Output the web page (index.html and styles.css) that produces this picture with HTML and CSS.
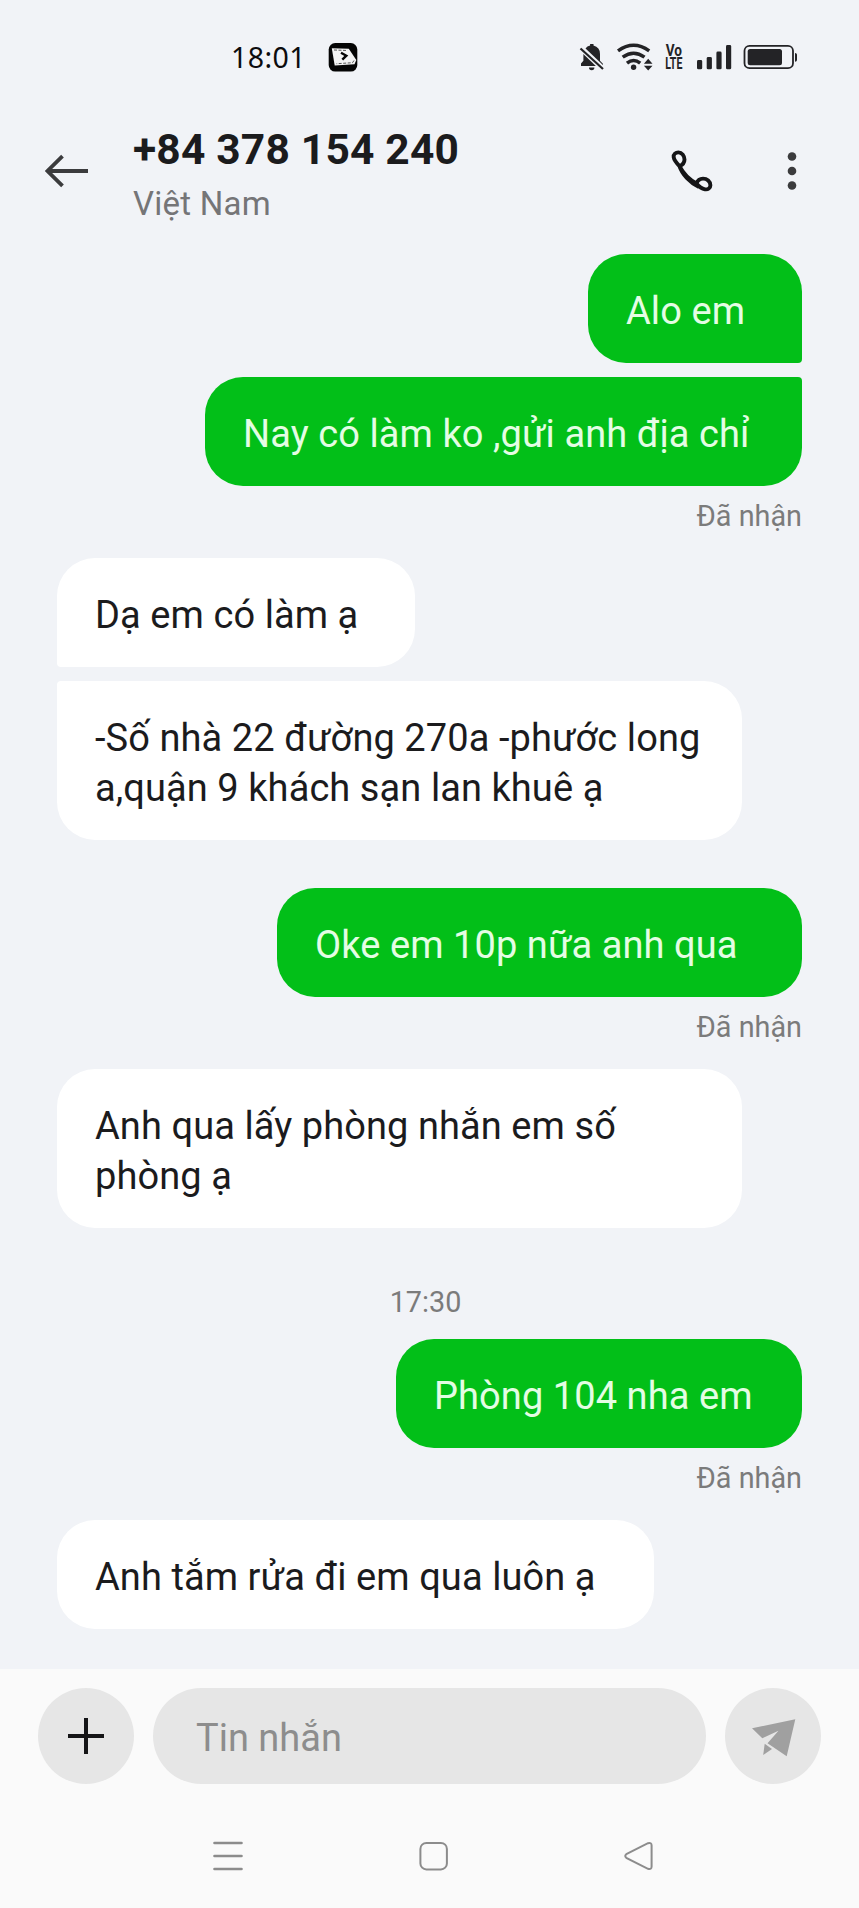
FILE: index.html
```html
<!DOCTYPE html>
<html lang="vi">
<head>
<meta charset="utf-8">
<title>Tin nhắn</title>
<link rel="stylesheet" href="styles.css">
</head>
<body>
<div class="statusbar">
  <span class="clock">18:01</span>
  <svg class="app-icon" width="30" height="30" viewBox="0 0 30 30"><rect x="0.700" y="1" width="28.600" height="28.600" rx="6.500" fill="#050505"/><path d="M3.800 6.200 20.800 6.700 28.300 18 26.500 22.200 6.700 23.500Z" fill="#f4f4f4"/><path d="M6 8 19.500 8.500M26 18.500l-1.500 2.200L8.500 21.700" fill="none" stroke="#444" stroke-width=".9" stroke-dasharray="3 1.500"/><path d="M13 10.800 18.300 13.700 14.300 17.600" fill="none" stroke="#050505" stroke-width="2.400"/></svg>
  <svg class="status-icons" width="222" height="30" viewBox="578 42 222 30">
    <g fill="#232326">
      <path d="M581 66v-2.400l2.400-2.900V54a8.700 8.700 0 0 1 6.700-8.400V44h3.400v1.600A8.700 8.700 0 0 1 600 54v6.700l2.900 3V66Z"/>
      <path d="M589 67.600h5.400a2.700 2.700 0 0 1-5.400 0Z"/>
      <circle cx="633.600" cy="67.300" r="2.700"/>
      <path d="m648.200 58.800 4.300 4.900h-8.600ZM648.200 70.500l4.300-4.800h-8.600Z"/>
      <rect x="697" y="60" width="5.200" height="9.300" rx="1.400"/><rect x="706.700" y="57" width="5.200" height="12.300" rx="1.400"/><rect x="716.400" y="51.500" width="5.200" height="17.800" rx="1.400"/><rect x="726" y="45" width="5.200" height="24.300" rx="1.400"/>
      <rect x="747.700" y="49" width="34.300" height="16.200" rx="2.500"/>
      <path d="M795 53c1.200 0 2 .8 2 2v4.800c0 1.200-.8 2-2 2Z"/>
    </g>
    <g fill="none">
      <path d="m581 48 21.800 20.700" stroke="#f1f3f7" stroke-width="5.600"/>
      <path d="m580.500 48.500 22.500 20.500" stroke="#232326" stroke-width="2.200"/>
      <path d="M618 50.800q15.600-11.200 31.200 0M622.700 57.200q10.900-7.900 21.800 0M627 63.200q6.600-5.400 13.200 0" stroke="#232326" stroke-width="3.500"/>
      <rect x="744.500" y="45.800" width="48.500" height="22.400" rx="5" stroke="#232326" stroke-width="1.800"/>
    </g>
    <g class="volte"><text transform="translate(665.700 56.300) scale(.85 1)">Vo</text><text transform="translate(665.300 69) scale(.66 1)">LTE</text></g>
  </svg>
</div>

<header class="header">
  <svg class="back" width="44" height="34" viewBox="45 154 44 34"><path d="M47.500 171H88M62.500 156.200 47.500 171 62.500 185.800" fill="none" stroke="#3b3b3d" stroke-width="3.800"/></svg>
  <div class="contact">
    <h1 class="number">+84 378 154 240</h1>
    <div class="country">Việt Nam</div>
  </div>
  <svg class="call" width="44" height="44" viewBox="670 149 44 44"><path d="M679.500 166.200C676 162.500 674 159.500 673.700 157.300 673.200 154 675.800 152.400 678.400 152.400 682 152.400 684.500 156 684.500 159.600 684.500 162.500 682.500 165 679.500 166.200C683 173 689.500 179.800 696.500 183.500 697.500 180.600 700 178.600 703 178.600 707 178.600 710.400 181.400 710.400 185.300 710.400 188 708 189.800 705 189.300 702.500 188.900 699.500 187.300 696.500 183.500M679 165C682 174.500 690 182.800 699 187" fill="none" stroke="#151517" stroke-width="3.900" stroke-linejoin="round"/></svg>
  <svg class="more" width="12" height="42" viewBox="0 0 12 42" fill="#3b3b3d"><circle cx="6" cy="6.500" r="4.300"/><circle cx="6" cy="21" r="4.300"/><circle cx="6" cy="35.500" r="4.300"/></svg>
</header>

<main class="chat">
  <div class="bubble sent joined-below w-alo">Alo em</div>
  <div class="bubble sent joined-above w-nay">Nay có làm ko ,gửi anh địa chỉ</div>
  <div class="receipt">Đã nhận</div>
  <div class="bubble received joined-below w-da">Dạ em có làm ạ</div>
  <div class="bubble received joined-above w-full">-Số nhà 22 đường 270a -phước long<br>a,quận 9 khách sạn lan khuê ạ</div>
  <div class="bubble sent spaced w-oke">Oke em 10p nữa anh qua</div>
  <div class="receipt">Đã nhận</div>
  <div class="bubble received w-full">Anh qua lấy phòng nhắn em số<br>phòng ạ</div>
  <div class="timestamp">17:30</div>
  <div class="bubble sent w-phong">Phòng 104 nha em</div>
  <div class="receipt">Đã nhận</div>
  <div class="bubble received w-anh">Anh tắm rửa đi em qua luôn ạ</div>
</main>

<footer class="footer">
  <div class="composer">
    <div class="round"><svg width="38" height="38" viewBox="0 0 38 38"><path d="M1 19h36M19 1v36" stroke="#151517" stroke-width="4"/></svg></div>
    <div class="input">Tin nhắn</div>
    <div class="round"><svg width="96" height="96" viewBox="725 1688 96 96" fill="#a0a0a0"><path d="M752 1728.300 795.300 1719.300 786.700 1756.300 767.500 1743.300 778.500 1730.700 762.300 1738.200Z"/><path d="M764.700 1743.800 772 1748.900 763.200 1755Z"/></svg></div>
  </div>
  <nav class="nav">
    <svg width="30" height="30" viewBox="0 0 30 30"><path d="M1.500 2h27M1.500 15h27M1.500 28h27" fill="none" stroke="#8c8c8c" stroke-width="2.600" stroke-linecap="round"/></svg>
    <svg width="30" height="30" viewBox="0 0 30 30"><rect x="1.400" y="1.900" width="26.500" height="26.500" rx="6" fill="none" stroke="#8c8c8c" stroke-width="2"/></svg>
    <svg width="30" height="30" viewBox="0 0 30 30"><path d="M2.300 13.200 24 2.200Q27.600 1.200 27.600 4.500V25.500Q27.600 28.800 24 27.800L2.300 16.800Q.2 15 2.300 13.200Z" fill="none" stroke="#8c8c8c" stroke-width="2"/></svg>
  </nav>
</footer>
</body>
</html>
```
FILE: styles.css
```css
* { box-sizing: border-box; }
body {
  margin: 0;
  width: 859px;
  height: 1908px;
  overflow: hidden;
  display: flex;
  flex-direction: column;
  background: #f1f3f7;
  font-family: Roboto, "Noto Sans", sans-serif;
  color: #1b1b1d;
}
svg { display: block; flex: none; }

.statusbar {
  height: 100px;
  padding: 42px 59px 0 231px;
  display: flex;
  align-items: flex-start;
}
.clock {
  font: 28.5px/30px "Noto Sans", sans-serif;
  letter-spacing: .4px;
  width: 97px;
  color: #0c0c0e;
}
.status-icons { margin-left: auto; }
.volte { font: bold 16px Roboto, sans-serif; fill: #232326; }

.header {
  height: 154px;
  padding: 0 61px 0 45px;
  display: flex;
  align-items: flex-start;
}
.back { margin-top: 54px; }
.contact { margin-left: 44px; flex: 1; white-space: nowrap; }
.number {
  margin: 24px 0 0;
  font-size: 42.5px;
  line-height: 52px;
  font-weight: 700;
  letter-spacing: .2px;
}
.country {
  margin-top: 9px;
  font-size: 33px;
  line-height: 38px;
  letter-spacing: .25px;
  color: #757577;
}
.call { margin-top: 49px; }
.more { margin: 50px 0 0 72px; }

.chat {
  height: 1415px;
  padding: 0 57px;
  display: flex;
  flex-direction: column;
}
.bubble {
  flex: none;
  padding: 32px 0 27px 38px;
  border-radius: 38px;
  font-size: 38px;
  line-height: 50px;
  letter-spacing: .08px;
  white-space: nowrap;
}
.sent { align-self: flex-end; background: #02bf18; color: #e4fde4; }
.received { align-self: flex-start; background: #fff; }
.sent.joined-below { border-bottom-right-radius: 4px; }
.sent.joined-above { border-top-right-radius: 4px; }
.received.joined-below { border-bottom-left-radius: 4px; }
.received.joined-above { border-top-left-radius: 4px; }
.joined-above { margin-top: 14px; }
.spaced { margin-top: 48px; }
.w-alo { width: 214px; }
.w-nay { width: 597px; }
.w-da { width: 358px; }
.w-full { width: 685px; }
.w-oke { width: 525px; }
.w-phong { width: 406px; }
.w-anh { width: 597px; }
.receipt, .timestamp {
  font-size: 28.8px;
  line-height: 32px;
  color: #7b7b7b;
}
.receipt { margin: 14px 0 26px; text-align: right; }
.timestamp { margin: 58px 0 21px; padding-right: 8px; text-align: center; }

.footer { flex: 1; background: #fafafa; }
.composer {
  height: 115px;
  padding: 19px 38px 0;
  display: flex;
  gap: 19px;
}
.round {
  width: 96px;
  height: 96px;
  border-radius: 50%;
  background: #e6e6e6;
  display: flex;
  align-items: center;
  justify-content: center;
}
.input {
  flex: 1;
  height: 96px;
  border-radius: 48px;
  padding-left: 43px;
  background: #e6e6e6;
  color: #8d8d8d;
  font-size: 38px;
  line-height: 101px;
}
.nav {
  display: flex;
  justify-content: space-between;
  padding: 56.5px 205px 0 213px;
}
```
